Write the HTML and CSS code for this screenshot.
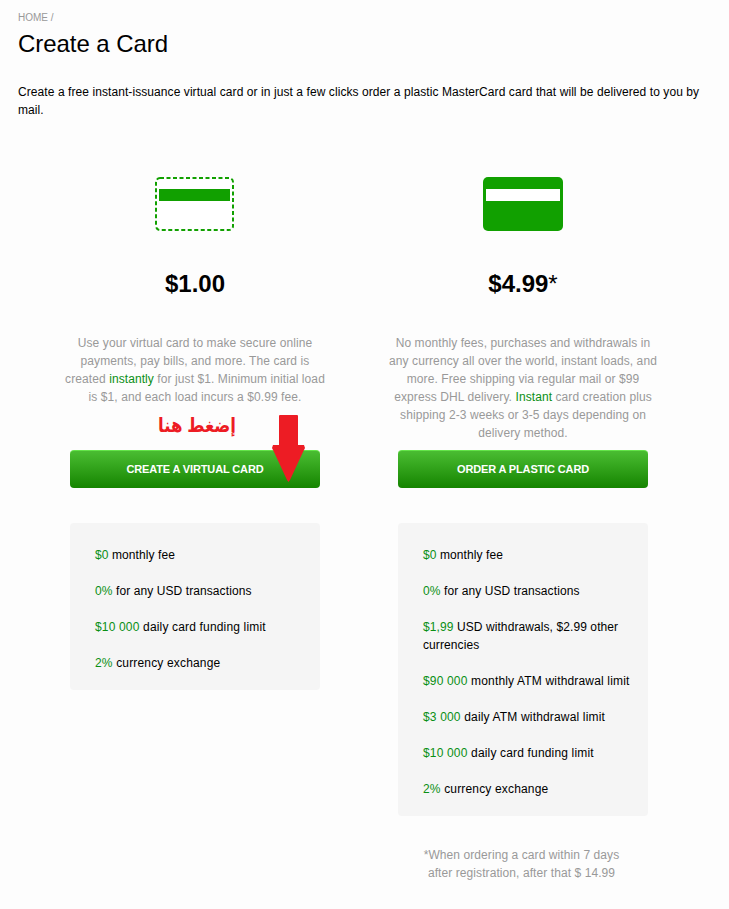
FILE: index.html
```
<!DOCTYPE html>
<html lang="en">
    <head>
        <meta charset="UTF-8">
        <title>Create a Card</title>
        <link rel="stylesheet" href="styles.css">
    </head>
    <body>
        <div class="breadcrumb"><a>HOME</a> /</div>
        <h1>Create a Card</h1>
        <p class="intro">Create a free instant-issuance virtual card or in just a few clicks order a plastic MasterCard card that will be delivered to you by<br>mail.</p>
        <div class="cards">
            <div class="card">
                <svg class="card-icon" width="80" height="54" viewBox="0 0 80 54">
                    <rect x="1" y="1" width="77" height="52" rx="4" fill="#fff" stroke="#11a000" stroke-width="2" stroke-dasharray="4 2.5"/>
                    <rect x="4" y="12" width="71" height="12" fill="#11a000"/>
                </svg>
                <div class="price">$1.00</div>
                <p class="about">
                    Use your virtual card to make secure online<br>
                    payments, pay bills, and more. The card is<br>
                    created <b>instantly</b> for just $1. Minimum initial load<br>
                    is $1, and each load incurs a $0.99 fee.
                </p>
                <a class="button">CREATE A VIRTUAL CARD</a>
                <div class="hint" lang="ar" dir="rtl">إضغط هنا</div>
                <svg class="arrow" width="33" height="67" viewBox="0 0 33 67">
                    <path d="M7 1Q7 0 8 0H25Q26 0 26 1V30H32L33 33L31 37L18 65L16.500 67L15 65L2 37L0 33L1 30H7Z" fill="#ed1c24"/>
                </svg>
                <ul class="fees">
                    <li><b>$0</b> monthly fee</li>
                    <li><b>0%</b> for any USD transactions</li>
                    <li class="wide"><b>$10 000</b> daily card funding limit</li>
                    <li class="wide"><b>2%</b> currency exchange</li>
                </ul>
            </div>
            <div class="card">
                <svg class="card-icon" width="80" height="54" viewBox="0 0 80 54">
                    <rect width="80" height="54" rx="5" fill="#11a000"/>
                    <rect x="3" y="12" width="74" height="12" fill="#fff"/>
                </svg>
                <div class="price">$4.99<span class="star">*</span></div>
                <p class="about">
                    No monthly fees, purchases and withdrawals in<br>
                    any currency all over the world, instant loads, and<br>
                    more. Free shipping via regular mail or $99<br>
                    express DHL delivery. <b>Instant</b> card creation plus<br>
                    shipping 2-3 weeks or 3-5 days depending on<br>
                    delivery method.
                </p>
                <a class="button">ORDER A PLASTIC CARD</a>
                <ul class="fees">
                    <li><b>$0</b> monthly fee</li>
                    <li><b>0%</b> for any USD transactions</li>
                    <li><b>$1,99</b> USD withdrawals, $2.99 other<br>currencies</li>
                    <li class="wide"><b>$90 000</b> monthly ATM withdrawal limit</li>
                    <li class="wide"><b>$3 000</b> daily ATM withdrawal limit</li>
                    <li class="wide"><b>$10 000</b> daily card funding limit</li>
                    <li class="wide"><b>2%</b> currency exchange</li>
                </ul>
                <p class="note">*When ordering a card within 7 days<br>after registration, after that $ 14.99</p>
            </div>
        </div>
    </body>
</html>
```

FILE: styles.css
```
* {
    padding: 0;
    margin: 0;
    box-sizing: border-box;
}
body {
    background: #fdfdfd;
    color: #000;
    font: 12px/18px "Liberation Sans", Arial, sans-serif;
    padding: 9px 18px 0;
}
b {
    font-weight: normal;
    color: #0a8f14;
}
.breadcrumb {
    font-size: 10px;
    color: #999;
}
h1 {
    font-size: 24px;
    line-height: 30px;
    font-weight: normal;
    letter-spacing: -0.05px;
    margin-top: 2px;
}
.intro {
    margin-top: 24px;
    letter-spacing: 0.077px;
    white-space: nowrap;
}
.cards {
    display: flex;
    align-items: flex-start;
    gap: 58px;
    margin: 58px 0 0 42px;
}
.card {
    position: relative;
    width: 270px;
    display: flex;
    flex-direction: column;
    align-items: center;
}
.card-icon {
    display: block;
}
.price {
    font-size: 24px;
    line-height: 30px;
    font-weight: bold;
    margin-top: 38px;
}
.star {
    font-weight: normal;
}
.about {
    height: 108px;
    margin-top: 35px;
    color: #999;
    letter-spacing: 0.085px;
    text-align: center;
    white-space: nowrap;
}
.button {
    width: 250px;
    height: 38px;
    margin-top: 8px;
    border-radius: 4px;
    border-top: 1px solid #63e449;
    background: linear-gradient(#4abd32, #158400);
    color: #fff;
    font-size: 11px;
    font-weight: bold;
    letter-spacing: -0.14px;
    line-height: 37px;
    text-align: center;
}
.hint {
    position: absolute;
    left: 98px;
    top: 233px;
    color: #ed1c24;
    font: bold 20px/30px "Liberation Sans", "DejaVu Sans", sans-serif;
    white-space: nowrap;
    transform: scaleX(0.83);
    transform-origin: left;
}
.arrow {
    position: absolute;
    left: 212px;
    top: 238px;
}
.fees {
    list-style: none;
    width: 250px;
    margin-top: 35px;
    padding: 23px 0 0 25px;
    border-radius: 4px;
    background: #f5f5f5;
    letter-spacing: 0.09px;
    white-space: nowrap;
}
.fees li {
    margin-bottom: 18px;
}
.fees .wide {
    letter-spacing: 0.165px;
}
.note {
    width: 250px;
    margin-top: 30px;
    padding-right: 3px;
    color: #999;
    letter-spacing: 0.08px;
    text-align: center;
}
```
